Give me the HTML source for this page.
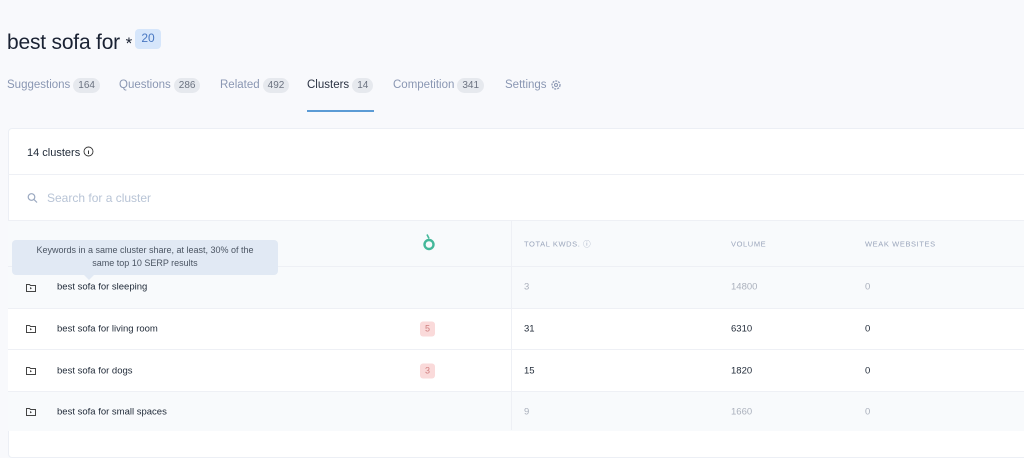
<!DOCTYPE html>
<html><head><style>
*{margin:0;padding:0;box-sizing:border-box}
body{width:1024px;height:428px;overflow:hidden;background:#f8f9fc;font-family:"Liberation Sans",sans-serif;position:relative;color:#1f2937}
.abs{position:absolute}
h1{position:absolute;left:7px;top:31px;font-size:21px;font-weight:normal;color:#1a2233;letter-spacing:-0.2px}
.badge{position:absolute;left:135px;top:29px;width:26px;height:20px;background:#d6e6fb;border-radius:4px;color:#4a78c2;font-size:12px;text-align:center;line-height:18px}
.tab{position:absolute;top:77px;font-size:11.5px;color:#8a97b3;display:flex;align-items:center;height:16px}
.cnt{background:#e6e9ee;color:#6b7280;font-size:10px;border-radius:8px;padding:0 5px;margin-left:3px;line-height:15px}
.card{position:absolute;left:8px;top:128px;width:1030px;height:330px;background:#fff;border:1px solid #eceff5;border-radius:4px}
.row{position:absolute;left:8px;width:1030px;border-top:1px solid #eef0f5;font-size:9.5px}
.light{background:#f8fafc}
.c{position:absolute;top:50%;transform:translateY(-50%)}
.hd{font-size:7.5px;color:#9aa5bb;letter-spacing:0.6px}
.pill{background:#fadada;color:#d08080;border-radius:3px;width:15px;height:15px;text-align:center;line-height:15px;font-size:9px}
.g{color:#aab0bc}
</style></head><body>
<h1>best sofa for <span style="font-size:17px">*</span></h1>
<div class="badge">20</div>
<div class="tab" style="left:7px">Suggestions<span class="cnt">164</span></div>
<div class="tab" style="left:119px">Questions<span class="cnt">286</span></div>
<div class="tab" style="left:220px">Related<span class="cnt">492</span></div>
<div class="tab" style="left:307px;color:#2c3444">Clusters<span class="cnt">14</span></div>
<div class="tab" style="left:393px">Competition<span class="cnt">341</span></div>
<div class="tab" style="left:505px">Settings <svg width="12" height="12" viewBox="0 0 12 12" style="margin-left:3px"><circle cx="6" cy="6" r="4" fill="none" stroke="#8a97b3" stroke-width="1.3" stroke-dasharray="2 1"/><circle cx="6" cy="6" r="1.5" fill="none" stroke="#8a97b3"/></svg></div>
<div class="abs" style="left:307px;top:110px;width:67px;height:2px;background:#5b9bd5"></div>
<div class="card"></div>
<div class="abs" style="left:27px;top:146px;font-size:11px;color:#1f2937">14 clusters <svg width="11" height="11" viewBox="0 0 11 11" style="vertical-align:-1px"><circle cx="5.5" cy="5.5" r="4.5" fill="none" stroke="#333" stroke-width="0.9"/><line x1="5.5" y1="4.5" x2="5.5" y2="8" stroke="#333"/></svg></div>
<div class="row" style="top:174px;height:46px"><svg class="c" style="left:19px" width="11" height="11" viewBox="0 0 11 11"><circle cx="4.5" cy="4.5" r="3.3" fill="none" stroke="#9aa8c0" stroke-width="1.2"/><line x1="7" y1="7" x2="10" y2="10" stroke="#9aa8c0" stroke-width="1.2"/></svg><span class="c" style="left:39px;font-size:12px;color:#b8c4d6">Search for a cluster</span></div>
<div class="row light" style="top:220px;height:46px"><span class="c" style="left:414px;top:23px"><svg width="14" height="18" viewBox="0 0 14 18"><path d="M5 1 L7 5" stroke="#44b89a" stroke-width="1.6"/><circle cx="7" cy="11" r="4.5" fill="none" stroke="#44b89a" stroke-width="2.4"/></svg></span><span class="c hd" style="left:516px">TOTAL KWDS. ⓘ</span><span class="c hd" style="left:723px">VOLUME</span><span class="c hd" style="left:857px">WEAK WEBSITES</span></div>
<div class="row light" style="top:266px;height:42px"></div>
<div class="row" style="top:308px;height:41px;background:#fff"><span class="c" style="left:49px">best sofa for living room</span><span class="c pill" style="left:412px">5</span><span class="c" style="left:516px">31</span><span class="c" style="left:723px">6310</span><span class="c" style="left:857px">0</span></div>
<div class="row" style="top:349px;height:42px;background:#fff"><span class="c" style="left:49px">best sofa for dogs</span><span class="c pill" style="left:412px">3</span><span class="c" style="left:516px">15</span><span class="c" style="left:723px">1820</span><span class="c" style="left:857px">0</span></div>
<div class="row light" style="top:391px;height:40px"><span class="c" style="left:49px">best sofa for small spaces</span><span class="c g" style="left:516px">9</span><span class="c g" style="left:723px">1660</span><span class="c g" style="left:857px">0</span></div>
<div class="abs" style="left:511px;top:220px;width:1px;height:210px;background:#eef0f5"></div>
<div class="abs" style="left:8px;top:266px;width:1030px;height:42px;font-size:9.5px"><span class="c" style="left:49px">best sofa for sleeping</span><span class="c g" style="left:516px">3</span><span class="c g" style="left:723px">14800</span><span class="c g" style="left:857px">0</span></div>
<svg class="abs" style="left:26px;top:283px" width="10" height="9" viewBox="0 0 10 9"><path d="M.5 1.5h3l1 1h5v6h-9z" fill="none" stroke="#444"/><path d="M4 4l2 1.2-2 1.2z" fill="#444"/></svg>
<svg class="abs" style="left:26px;top:324px" width="10" height="9" viewBox="0 0 10 9"><path d="M.5 1.5h3l1 1h5v6h-9z" fill="none" stroke="#444"/><path d="M4 4l2 1.2-2 1.2z" fill="#444"/></svg>
<svg class="abs" style="left:26px;top:366px" width="10" height="9" viewBox="0 0 10 9"><path d="M.5 1.5h3l1 1h5v6h-9z" fill="none" stroke="#444"/><path d="M4 4l2 1.2-2 1.2z" fill="#444"/></svg>
<svg class="abs" style="left:26px;top:407px" width="10" height="9" viewBox="0 0 10 9"><path d="M.5 1.5h3l1 1h5v6h-9z" fill="none" stroke="#444"/><path d="M4 4l2 1.2-2 1.2z" fill="#444"/></svg>
<div class="abs" style="left:12px;top:240px;width:266px;height:35px;background:#e1e9f4;border-radius:4px;font-size:9px;color:#4b5563;text-align:center;line-height:13px;padding-top:4px">Keywords in a same cluster share, at least, 30% of the<br>same top 10 SERP results</div>
<div class="abs" style="left:84px;top:275px;width:0;height:0;border-left:5px solid transparent;border-right:5px solid transparent;border-top:5px solid #e1e9f4"></div>
</body></html>
